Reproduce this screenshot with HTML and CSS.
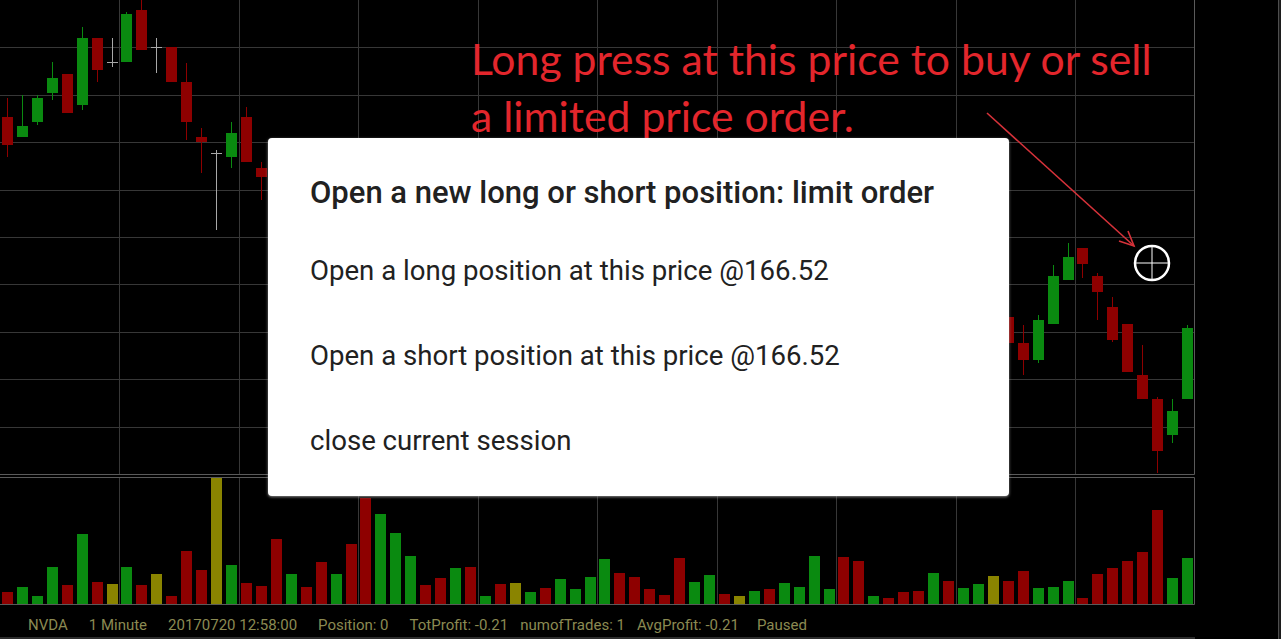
FILE: index.html
```html
<!DOCTYPE html>
<html lang="en">
<head>
<meta charset="utf-8">
<title>Chart</title>
<link rel="stylesheet" href="styles.css">
</head>
<body>
<div class="screen">
  <div class="main">
    <div class="chart">
      <svg id="chart" class="chart-svg" width="1195" height="605" viewBox="0 0 1195 605"></svg>
      <div class="status">
        <span class="wide">NVDA</span>
        <span class="wide">1 Minute</span>
        <span class="wide">20170720 12:58:00</span>
        <span class="wide">Position: 0</span>
        <span>TotProfit: -0.21</span>
        <span>numofTrades: 1</span>
        <span class="paused-gap">AvgProfit: -0.21</span>
        <span>Paused</span>
      </div>
    </div>
    <div class="side"></div>
    <div class="edge"></div>
  </div>

  <div class="note">Long press at this price to buy or sell<br>a limited price order.</div>

  <svg class="pointer" width="1281" height="639" viewBox="0 0 1281 639">
    <line class="arrow" x1="987" y1="113" x2="1134" y2="246"/>
    <polyline class="arrow" points="1128,231 1134,246 1119,241"/>
    <circle class="cross-ring" cx="1152" cy="263" r="17"/>
    <line class="cross-line" x1="1135" y1="263" x2="1169" y2="263"/>
    <line class="cross-line" x1="1152" y1="246" x2="1152" y2="280"/>
  </svg>

  <div class="dialog">
    <div class="dialog-title">Open a new long or short position: limit order</div>
    <div class="dialog-item">Open a long position at this price @166.52</div>
    <div class="dialog-item">Open a short position at this price @166.52</div>
    <div class="dialog-item">close current session</div>
  </div>
</div>
<script src="script.js"></script>
</body>
</html>
```

FILE: styles.css
```css
html, body {
  margin: 0;
  padding: 0;
  background: #000;
}

.screen {
  position: relative;
  width: 1281px;
  height: 639px;
  overflow: hidden;
  background: #000;
  font-family: Roboto, "Liberation Sans", sans-serif;
}

.main {
  display: flex;
  height: 639px;
}

.chart {
  width: 1195px;
  display: flex;
  flex-direction: column;
}

.chart-svg {
  display: block;
}

.side {
  flex: 1;
  background: #000;
}

.edge {
  width: 2px;
  background: #1c1c1c;
  border-left: 1px solid #4e4e4e;
}

.status {
  box-sizing: border-box;
  display: flex;
  align-items: center;
  height: 34px;
  padding: 8px 0 0 28px;
  gap: 12px;
  font-size: 15px;
  color: #8b8a52;
  white-space: nowrap;
  border-bottom: 2px solid #2c2c2c;
}

.status .wide {
  margin-right: 9px;
}

.status .paused-gap {
  margin-right: 6px;
}

/* chart primitives */
.grid {
  stroke: #373737;
  stroke-width: 1;
}

.frame {
  stroke: #5a5a5a;
  stroke-width: 1;
  fill: none;
}

.up { fill: #0a8a10; stroke: #0a8a10; }
.down { fill: #8e0000; stroke: #8e0000; }
.flat { fill: #8a8400; stroke: #a8a8a8; }
.wick { stroke-width: 1; fill: none; }

/* annotation */
.note {
  position: absolute;
  left: 471px;
  top: 30px;
  font-family: Lato, "Open Sans", sans-serif;
  font-size: 42.7px;
  line-height: 57px;
  color: #e3262c;
  white-space: nowrap;
}

.pointer {
  position: absolute;
  left: 0;
  top: 0;
  pointer-events: none;
}

.arrow {
  stroke: #d6323a;
  stroke-width: 1.6;
  fill: none;
}

.cross-ring {
  stroke: #fff;
  stroke-width: 2.5;
  fill: none;
}

.cross-line {
  stroke: #fff;
  stroke-width: 1;
}

/* dialog */
.dialog {
  position: absolute;
  left: 268px;
  top: 138px;
  width: 741px;
  height: 358px;
  box-sizing: border-box;
  padding: 38px 42px 0;
  background: #fff;
  border-radius: 4px;
  box-shadow: 0 1px 3px rgba(170, 170, 170, 0.8);
  color: #212121;
}

.dialog-title {
  font-size: 31px;
  font-weight: 500;
  line-height: 34px;
  margin-bottom: 18px;
  white-space: nowrap;
}

.dialog-item {
  font-size: 27.6px;
  line-height: 85px;
  height: 85px;
  white-space: nowrap;
}
```

FILE: script.js
```js
(function () {
  var NS = 'http://www.w3.org/2000/svg';
  var svg = document.getElementById('chart');
  var W = 1195;
  var SLOT = W / 80;

  function el(tag, attrs) {
    var e = document.createElementNS(NS, tag);
    for (var k in attrs) e.setAttribute(k, attrs[k]);
    svg.appendChild(e);
    return e;
  }

  // price panel grid
  var vx = [119.5, 239.5, 358.5, 478.5, 597.5, 717.5, 836.5, 956.5, 1075.5];
  var i;
  for (i = 1; i <= 9; i++) {
    var y = Math.round(47.4 * i) + 0.5;
    el('line', { x1: 0, y1: y, x2: W - 1, y2: y, 'class': 'grid' });
  }
  for (i = 0; i < vx.length; i++) {
    el('line', { x1: vx[i], y1: 0, x2: vx[i], y2: 474, 'class': 'grid' });
    el('line', { x1: vx[i], y1: 477, x2: vx[i], y2: 604, 'class': 'grid' });
  }
  // frames
  el('polyline', { points: '0,474.5 1194.5,474.5 1194.5,0', 'class': 'frame' });
  el('polyline', { points: '0,477.5 1194.5,477.5 1194.5,604.5 0,604.5', 'class': 'frame' });

  // candles: [col, bodyTop, bodyBottom, wickTop, wickBottom, kind]
  var candles = [
    [0, 117, 145, 98, 157, 'd'],
    [1, 126, 137, 95, 137, 'u'],
    [2, 98, 122, 95, 125, 'u'],
    [3, 78, 93, 62, 100, 'u'],
    [4, 74, 113, 74, 113, 'd'],
    [5, 38, 105, 27, 110, 'u'],
    [6, 38, 70, 38, 82, 'd'],
    [7, 62, 62, 38, 67, 'f'],
    [8, 14, 62, 12, 62, 'u'],
    [9, 10, 50, 0, 50, 'd'],
    [10, 47, 47, 38, 73, 'f'],
    [11, 47, 82, 47, 82, 'd'],
    [12, 82, 122, 63, 140, 'd'],
    [13, 137, 142, 128, 173, 'd'],
    [14, 153, 153, 150, 230, 'f'],
    [15, 133, 157, 122, 168, 'u'],
    [16, 117, 162, 107, 162, 'd'],
    [17, 168, 177, 162, 200, 'd'],
    [67, 317, 343, 305, 350, 'd'],
    [68, 343, 360, 325, 375, 'd'],
    [69, 320, 360, 315, 363, 'u'],
    [70, 276, 324, 265, 324, 'u'],
    [71, 257, 280, 243, 280, 'u'],
    [72, 248, 264, 248, 278, 'd'],
    [73, 276, 292, 273, 320, 'd'],
    [74, 307, 340, 297, 342, 'd'],
    [75, 324, 372, 324, 372, 'd'],
    [76, 375, 399, 345, 399, 'd'],
    [77, 399, 451, 397, 473, 'd'],
    [78, 411, 435, 399, 443, 'u'],
    [79, 328, 399, 325, 399, 'u']
  ];
  var cls = { u: 'up', d: 'down', f: 'flat' };
  candles.forEach(function (c) {
    var cx = SLOT * (c[0] + 0.5);
    var x = Math.round(cx - 5.5);
    var mid = x + 5.5;
    var k = cls[c[5]];
    el('line', { x1: mid, y1: c[3], x2: mid, y2: c[4], 'class': 'wick ' + k });
    if (c[5] === 'f') {
      el('line', { x1: x, y1: c[1] + 0.5, x2: x + 11, y2: c[1] + 0.5, 'class': 'wick flat' });
    } else {
      el('rect', { x: x, y: c[1], width: 11, height: Math.max(1, c[2] - c[1]), 'class': k, 'stroke-width': 0 });
    }
  });

  // volume bars
  var tops = [592, 587, 596, 567, 585, 534, 582, 584, 567, 585, 574, 596, 551, 570, 478, 565, 583, 586, 539, 574,
    587, 562, 574, 544, 498, 514, 533, 556, 585, 578, 568, 567, 596, 584, 583, 592, 588, 579, 589, 577,
    559, 573, 577, 589, 595, 558, 582, 575, 594, 596, 591, 589, 583, 587, 556, 589, 557, 561, 596, 598,
    592, 591, 573, 581, 588, 584, 576, 581, 571, 588, 587, 581, 598, 574, 568, 561, 552, 510, 578, 558];
  var kindStr = 'rgggrgrogrorrrogrrrgrrgrrgggrrgrgrogrggggrrrrrggrogrggggrrgrrrgrggorrgggrrrrrrgg';
  var vcls = { r: 'down', g: 'up', o: 'flat' };
  for (i = 0; i < 80; i++) {
    var cxv = SLOT * (i + 0.5);
    var xv = Math.round(cxv - 5.5);
    var kk = vcls[kindStr.charAt(i)] || 'up';
    el('rect', { x: xv, y: tops[i], width: 11, height: 604 - tops[i], 'class': kk, 'stroke-width': 0 });
  }
})();
```
